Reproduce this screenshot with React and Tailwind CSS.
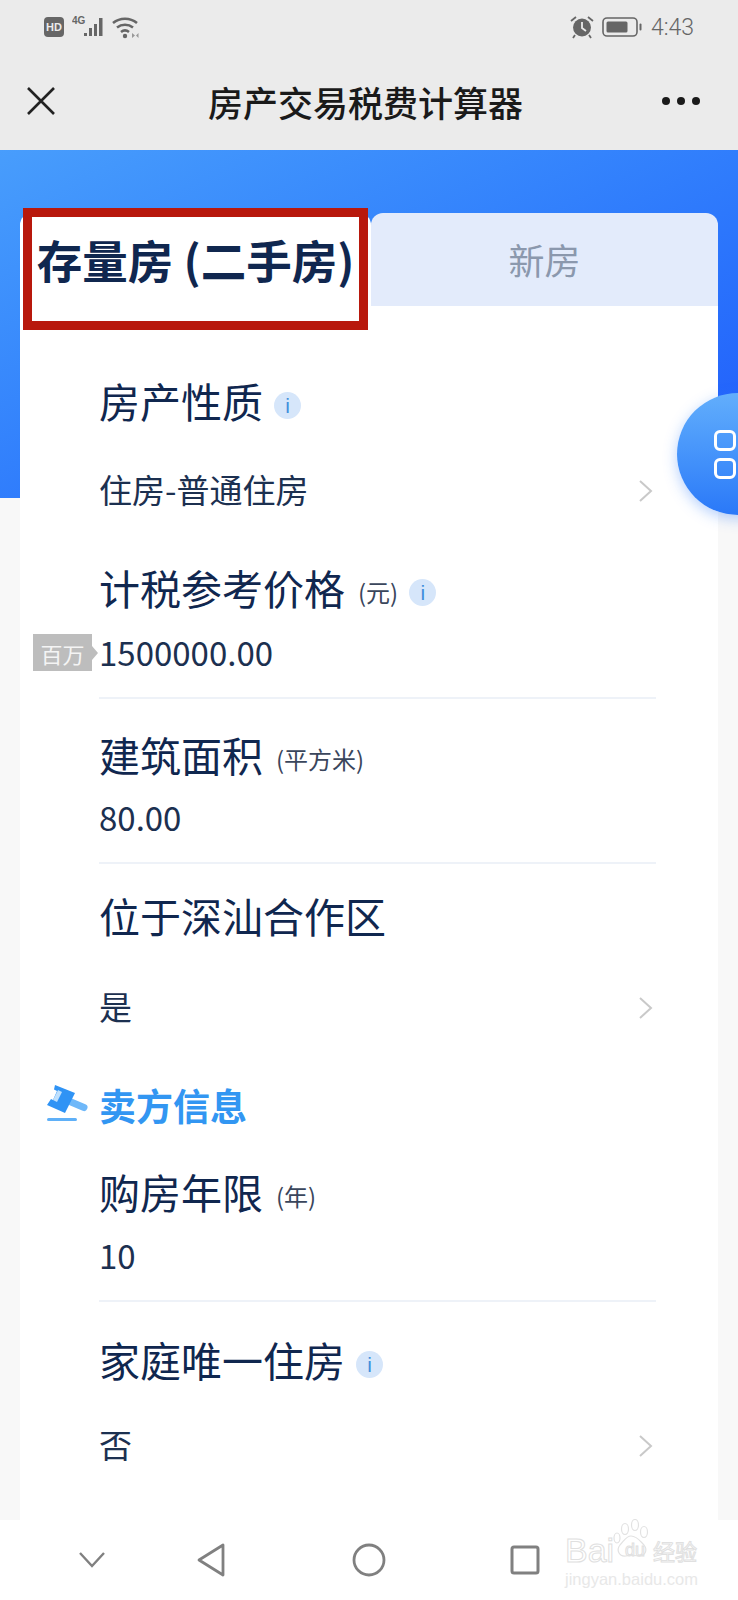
import React from 'react';

const cjk = { fontFamily: '"Noto Sans CJK SC", "Noto Sans", sans-serif' };

function InfoDot() {
  return (
    <span className="ml-[11px] flex h-[27px] w-[27px] items-center justify-center rounded-full bg-[#d6e6fa] text-[21px] leading-none text-[#3f8fdc] mt-[8px]" style={{ fontFamily: '"Liberation Sans", sans-serif' }}>
      i
    </span>
  );
}

function Chevron() {
  return (
    <svg width="16" height="24" viewBox="0 0 16 24" fill="none" stroke="#c9c9c9" strokeWidth="2">
      <path d="M2 2l11 10L2 22" />
    </svg>
  );
}

function Label({ text, unit, info }) {
  return (
    <div className="flex h-[60px] items-center text-[41px] text-[#10274f]">
      <span>{text}</span>
      {unit && <span className="ml-[13px] mt-[8px] text-[24px] text-[#3a465c]">{unit}</span>}
      {info && <InfoDot />}
    </div>
  );
}

function SelectField({ label, info, value, valueClass }) {
  return (
    <div>
      <Label text={label} info={info} />
      <div className={`flex items-center justify-between pr-[2px] text-[33px] text-[#1c3050] ${valueClass}`}>
        <span className="mb-[2px]">{value}</span>
        <Chevron />
      </div>
    </div>
  );
}

function InputField({ label, unit, info, value, valueClass, children, className }) {
  return (
    <div className={`relative border-b-2 border-[#eef2f8] ${className}`}>
      <Label text={label} unit={unit} info={info} />
      <div className={`flex items-center text-[33px] text-[#1c3050] ${valueClass}`}>{value}</div>
      {children}
    </div>
  );
}

function Gavel() {
  return (
    <svg width="42" height="42" viewBox="0 0 42 42">
      <path d="M24 18l13 5.500" stroke="#6fb8f9" strokeWidth="7" strokeLinecap="round" fill="none" />
      <path d="M8 1l20 8-10 20L0 21l4-6 2 1 4-9-3-1.500z" fill="#2f93f5" />
      <path d="M11 6l4 2-5 10-4-2z" fill="#bfe0fd" />
      <rect x="0" y="34" width="30" height="3" rx="1.500" fill="#5fb0f8" />
    </svg>
  );
}

function StatusLeft() {
  return (
    <div className="flex items-center">
      <span className="flex h-[20px] w-[20px] items-center justify-center rounded-[4px] bg-[#666] text-[11px] font-bold leading-none text-[#ebebeb]" style={{ fontFamily: '"Liberation Sans", sans-serif' }}>HD</span>
      <svg width="76" height="24" viewBox="0 0 76 24" className="ml-[8px]" fill="#666">
        <text x="0" y="9" fontSize="10" fontWeight="bold" fontFamily="Liberation Sans">4G</text>
        <rect x="12" y="18" width="3" height="3" />
        <rect x="17" y="13" width="3" height="8" />
        <rect x="22" y="9" width="3" height="12" />
        <rect x="27" y="3" width="3.500" height="18" />
        <path d="M41 8a19 19 0 0 1 24 0" fill="none" stroke="#666" strokeWidth="2.600" />
        <path d="M45 12.500a13 13 0 0 1 16 0" fill="none" stroke="#666" strokeWidth="2.600" />
        <path d="M49 17a6.500 6.500 0 0 1 8 0" fill="none" stroke="#666" strokeWidth="2.600" />
        <circle cx="53" cy="21" r="2.200" />
        <path d="M60 18v5l3-2.500zM64 20.500l2.500-2.500v5z" fill="#999" />
      </svg>
    </div>
  );
}

function StatusRight() {
  return (
    <div className="flex items-center">
      <svg width="24" height="24" viewBox="0 0 24 24">
        <circle cx="12" cy="12.500" r="9" fill="#666" />
        <path d="M12 7v6l4 3" fill="none" stroke="#ebebeb" strokeWidth="1.800" />
        <path d="M1 6l5-4M23 6l-5-4M5 20l-2 3M19 20l2 3" stroke="#666" strokeWidth="1.800" />
      </svg>
      <svg width="42" height="24" viewBox="0 0 42 24" className="ml-[8px]">
        <rect x="1" y="3" width="34" height="18" rx="4" fill="none" stroke="#666" strokeWidth="1.600" />
        <rect x="4.500" y="6.500" width="21" height="11" rx="1.500" fill="#666" />
        <rect x="37.500" y="8.500" width="2" height="7" rx="1" fill="#666" />
      </svg>
      <span className="ml-[7px] text-[23px] font-light leading-none text-[#666]" style={{ fontFamily: 'Roboto, sans-serif' }}>4:43</span>
    </div>
  );
}

function Watermark() {
  return (
    <div className="absolute left-[565px] top-[1523px] w-[140px] leading-none" style={{ fontFamily: '"Liberation Sans", sans-serif' }}>
      <svg width="44" height="44" viewBox="0 0 44 44" className="absolute left-[46px] top-[-4px]" fill="none" stroke="#e2e2e2" strokeWidth="1.200">
        <ellipse cx="14" cy="10" rx="3.500" ry="5.500" />
        <ellipse cx="24" cy="6" rx="3.500" ry="5.500" />
        <ellipse cx="33" cy="13" rx="3.500" ry="5.500" />
        <ellipse cx="6" cy="19" rx="3" ry="5" />
        <path d="M20 17c-5 0-7 5-11 9-4 5-1 12 6 11 4-1 8-1 12 0 7 1 10-6 6-11-4-4-7-9-13-9z" />
      </svg>
      <div className="mt-[10px] flex items-center text-[34px] text-transparent [-webkit-text-stroke:1px_#e0e0e0]">
        <span className="w-[52px]">Bai</span>
        <span className="w-[36px] text-center text-[18px]">du</span>
        <span className="text-[22px]" style={cjk}>经验</span>
      </div>
      <div className="mt-[4px] text-[16.500px] text-[#e8e8e8]">jingyan.baidu.com</div>
    </div>
  );
}

export default function App() {
  return (
    <div className="relative h-[1600px] w-[738px] overflow-hidden bg-[#f8f8f8]" style={cjk}>
      {/* status + title bar */}
      <div className="h-[150px] bg-[#ebebeb]">
        <div className="flex h-[54px] items-center justify-between px-[44px]">
          <StatusLeft />
          <StatusRight />
        </div>
        <div className="flex h-[94px] items-center justify-between pl-[26px] pr-[38px]">
          <svg width="30" height="30" viewBox="0 0 30 30" stroke="#222" strokeWidth="2.600" fill="none">
            <path d="M2 2l26 26M28 2L2 28" />
          </svg>
          <span className="ml-[13px] text-[35px] font-medium leading-none text-[#1a1a1a]">房产交易税费计算器</span>
          <div className="flex gap-[7px]">
            <span className="h-[8px] w-[8px] rounded-full bg-[#1a1a1a]" />
            <span className="h-[8px] w-[8px] rounded-full bg-[#1a1a1a]" />
            <span className="h-[8px] w-[8px] rounded-full bg-[#1a1a1a]" />
          </div>
        </div>
      </div>

      {/* blue band */}
      <div className="h-[348px] bg-gradient-to-br from-[#489dfc] to-[#2159fb]" />

      {/* card */}
      <div className="mx-[20px] mt-[-285px] h-[1307px]">
        <div className="flex h-[93px]">
          <div className="flex w-[351px] justify-center rounded-t-[12px] bg-white">
            <span className="mt-[19px] whitespace-nowrap text-[45.500px] font-bold leading-[54px] text-[#10274f]">存量房 (二手房)</span>
          </div>
          <div className="flex flex-1 justify-center rounded-t-[12px] bg-[#e3ebfb]">
            <span className="mt-[23px] text-[36px] leading-[46px] text-[#8b98ad]">新房</span>
          </div>
        </div>
        <div className="h-[1214px] bg-white pl-[79px] pr-[62px] pt-[65px]">
          <SelectField label="房产性质" info value="住房-普通住房" valueClass="h-[120px] mb-[7px]" />
          <InputField label="计税参考价格" unit="(元)" info value="1500000.00" valueClass="h-[70px]" className="h-[141px]">
            <div className="absolute left-[-66px] top-[76px] flex h-[37px] w-[59px] items-center justify-center bg-[#bdbdbd] text-[22px] leading-none text-[#f4f4f4]">
              百万
              <span className="absolute right-[-6px] top-[12px] h-0 w-0 border-y-[7px] border-l-[6px] border-y-transparent border-l-[#bdbdbd]" />
            </div>
          </InputField>
          <InputField label="建筑面积" unit="(平方米)" value="80.00" valueClass="h-[66px]" className="mt-[26px] h-[139px]" />
          <div className="mt-[22px]">
            <SelectField label="位于深汕合作区" value="是" valueClass="h-[124px]" />
          </div>
          <div className="ml-[-52px] mt-[10px] flex h-[50px] items-center gap-[10px] text-[37px] font-bold leading-none text-[#3296f2]">
            <Gavel />
            <span>卖方信息</span>
          </div>
          <InputField label="购房年限" unit="(年)" value="10" valueClass="h-[68px]" className="mt-[32px] h-[140px]" />
          <div className="mt-[28px]">
            <SelectField label="家庭唯一住房" info value="否" valueClass="h-[112px]" />
          </div>
        </div>
      </div>

      {/* floating button */}
      <div className="absolute left-[677px] top-[393px] flex h-[122px] w-[122px] flex-col gap-[7px] rounded-full bg-gradient-to-b from-[#62aefc] to-[#2a78f8] pl-[37px] pt-[37px] shadow-[0_4px_14px_rgba(42,120,248,0.35)]">
        <span className="h-[21px] w-[22px] rounded-[6px] border-[3px] border-white" />
        <span className="h-[21px] w-[22px] rounded-[6px] border-[3px] border-white" />
      </div>

      {/* nav bar */}
      <div className="absolute bottom-0 left-0 flex h-[80px] w-full items-center bg-white pl-[78px]">
        <svg width="28" height="18" viewBox="0 0 28 18" fill="none" stroke="#808080" strokeWidth="2.400">
          <path d="M2 2l12 13L26 2" />
        </svg>
        <svg width="30" height="34" viewBox="0 0 30 34" className="ml-[91px]" fill="none" stroke="#808080" strokeWidth="2.800" strokeLinejoin="round">
          <path d="M26 2v30L2 17z" />
        </svg>
        <svg width="34" height="34" viewBox="0 0 34 34" className="ml-[125px]" fill="none" stroke="#808080" strokeWidth="2.800">
          <circle cx="17" cy="17" r="15" />
        </svg>
        <svg width="30" height="30" viewBox="0 0 30 30" className="ml-[124px]" fill="none" stroke="#808080" strokeWidth="3">
          <rect x="2" y="2" width="26" height="26" rx="2" />
        </svg>
      </div>
      <Watermark />

      {/* red annotation box */}
      <div className="absolute left-[23px] top-[208px] h-[122px] w-[345px] border-[9px] border-[#b8180c]" />
    </div>
  );
}
